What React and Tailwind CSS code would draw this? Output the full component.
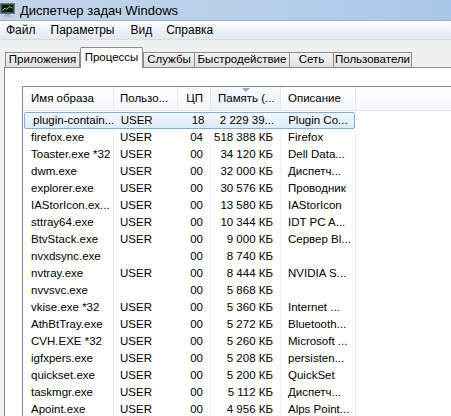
import React from 'react';

const rows = [
  ['plugin-contain...', 'USER', '18', '2 229 39...', 'Plugin Co...'],
  ['firefox.exe', 'USER', '04', '518 388 КБ', 'Firefox'],
  ['Toaster.exe *32', 'USER', '00', '34 120 КБ', 'Dell Data...'],
  ['dwm.exe', 'USER', '00', '32 000 КБ', 'Диспетч...'],
  ['explorer.exe', 'USER', '00', '30 576 КБ', 'Проводник'],
  ['IAStorIcon.ex...', 'USER', '00', '13 580 КБ', 'IAStorIcon'],
  ['sttray64.exe', 'USER', '00', '10 344 КБ', 'IDT PC A...'],
  ['BtvStack.exe', 'USER', '00', '9 000 КБ', 'Сервер Bl...'],
  ['nvxdsync.exe', '', '00', '8 740 КБ', ''],
  ['nvtray.exe', 'USER', '00', '8 444 КБ', 'NVIDIA S...'],
  ['nvvsvc.exe', '', '00', '5 868 КБ', ''],
  ['vkise.exe *32', 'USER', '00', '5 360 КБ', 'Internet ...'],
  ['AthBtTray.exe', 'USER', '00', '5 272 КБ', 'Bluetooth...'],
  ['CVH.EXE *32', 'USER', '00', '5 260 КБ', 'Microsoft ...'],
  ['igfxpers.exe', 'USER', '00', '5 208 КБ', 'persisten...'],
  ['quickset.exe', 'USER', '00', '5 200 КБ', 'QuickSet'],
  ['taskmgr.exe', 'USER', '00', '5 112 КБ', 'Диспетч...'],
  ['Apoint.exe', 'USER', '00', '4 956 КБ', 'Alps Point...'],
];

const tabs = ['Приложения', 'Процессы', 'Службы', 'Быстродействие', 'Сеть', 'Пользователи'];
const tabW = ['w-[75px]', 'w-[63px]', 'w-[52px]', 'w-[96px]', 'w-[45px]', 'w-[79px]'];

function AppIcon() {
  return (
    <svg width="15" height="14" viewBox="0 0 15 14">
      <rect x="0.5" y="0.5" width="14" height="10" fill="#3a4a58" stroke="#6b7c8c" />
      <rect x="2" y="2" width="11" height="7" fill="#0c1a12" />
      <polyline points="2.5,7.5 5,5 7,6.5 9,3.5 12.5,5" fill="none" stroke="#38e05a" strokeWidth="1" />
      <rect x="5" y="11" width="5" height="1.5" fill="#8a96a2" />
      <rect x="3" y="12.5" width="9" height="1.5" fill="#b0bac4" />
    </svg>
  );
}

function Row({ r, selected }) {
  const line = 'border-r border-[#f0f0f0]';
  return (
    <div className="flex h-[17px] items-center">
      <div
        className={`flex h-[17px] items-center ${selected ? 'ml-[1px] w-[331px] rounded-[2px] border border-[#84acdd] bg-gradient-to-b from-[#f2f8fe] to-[#dcebfb]' : 'w-[333px]'}`}
      >
        <div className={`h-full pl-[8px] flex items-center overflow-hidden ${selected ? 'w-[90px] pl-[7px]' : 'w-[91px] ' + line}`}>{r[0]}</div>
        <div className="h-full w-[64px] pl-[6px] flex items-center overflow-hidden">{r[1]}</div>
        <div className={`h-full w-[33px] pr-[7px] flex items-center justify-end ${selected ? '' : line}`}>{r[2]}</div>
        <div className={`h-full w-[70px] pr-[7px] flex items-center justify-end overflow-hidden ${selected ? '' : line}`}>{r[3]}</div>
        <div className={`h-full pl-[7px] flex items-center overflow-hidden ${selected ? 'w-[73px]' : 'w-[75px] ' + line}`}>{r[4]}</div>
      </div>
    </div>
  );
}

export default function App() {
  return (
    <div className="w-[451px] h-[416px] overflow-hidden bg-[#f0f0f0] text-[11.5px] text-black font-['Liberation_Sans',Arial,sans-serif] leading-none whitespace-nowrap">
      {/* title bar */}
      <div className="h-[21px] flex items-center gap-[5px] bg-gradient-to-r from-[#c3d4e7] via-[#b9d0ea] to-[#a9c7e8] border-b border-[#9fb3c9]">
        <AppIcon />
        <span className="text-[13px]">Диспетчер задач Windows</span>
      </div>

      {/* menu */}
      <div className="h-[19px] flex items-center bg-gradient-to-b from-[#fbfcfd] to-[#e4eaf2] border-b border-[#d6dde6] text-[12px]">
        <span className="ml-[6px]">Файл</span>
        <span className="ml-[15px]">Параметры</span>
        <span className="ml-[16px]">Вид</span>
        <span className="ml-[14px]">Справка</span>
      </div>

      {/* tabs */}
      <div className="h-[27px] flex items-end pl-[5px]">
        {tabs.map((t, i) =>
          i === 1 ? (
            <div
              key={t}
              className={`${tabW[i]} h-[21px] -mb-[1px] relative z-10 flex items-start pt-[4px] justify-center bg-white border border-b-0 border-[#898c95] rounded-t-[2px]`}
            >
              {t}
            </div>
          ) : (
            <div
              key={t}
              className={`${tabW[i]} h-[15px] flex items-center justify-center bg-gradient-to-b from-[#f3f3f3] to-[#e1e1e1] border border-b-0 border-[#898c95] ${i === 0 || i === 2 ? '' : '-ml-[1px]'}`}
            >
              {t}
            </div>
          )
        )}
      </div>

      {/* tab page */}
      <div className="ml-[4px] w-[470px] h-[360px] bg-white border-l border-t border-[#898c95] pl-[17px] pt-[18px]">
        <div className="h-full border-l border-t border-[#828790]">
          {/* header */}
          <div className="h-[24px] flex bg-gradient-to-b from-white to-[#f4f6f9] border-b border-[#e5e8ed]">
            <div className="w-[91px] pl-[8px] flex items-center border-r border-[#e3e6eb]">Имя образа</div>
            <div className="w-[64px] pl-[6px] flex items-center border-r border-[#e3e6eb]">Пользо...</div>
            <div className="w-[33px] pr-[7px] flex items-center justify-end border-r border-[#e3e6eb]">ЦП</div>
            <div className="w-[70px] pl-[7px] flex items-center border-r border-[#e3e6eb] relative bg-gradient-to-b from-[#f7fbfe] to-[#eaf2fa]">
              <svg className="absolute left-[31px] top-[1px]" width="8" height="4" viewBox="0 0 8 4">
                <polygon points="0,0 8,0 4,4" fill="#97aac3" />
              </svg>
              Память (...
            </div>
            <div className="w-[75px] pl-[7px] flex items-center border-r border-[#e3e6eb]">Описание</div>
            <div className="flex-1" />
          </div>
          <div className="pt-[1px]">
            {rows.map((r, i) => (
              <Row key={i} r={r} selected={i === 0} />
            ))}
          </div>
        </div>
      </div>
    </div>
  );
}
